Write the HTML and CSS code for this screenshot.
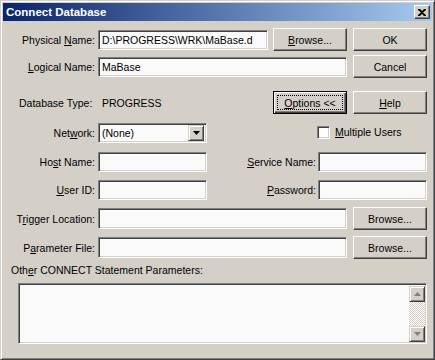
FILE: index.html
```html
<!DOCTYPE html>
<html lang="en">
<head>
    <meta charset="UTF-8">
    <title>Connect Database</title>
    <link rel="stylesheet" href="styles.css">
</head>
<body>
    <div class="window">
        <div class="titlebar">
            <span class="title">Connect Database</span>
            <span class="close-btn">
                <svg width="8" height="7" viewBox="0 0 8 7">
                    <path d="M0 0h2l2 2 2-2h2v1L5 3.5 8 6v1H6L4 5 2 7H0V6l3-2.5L0 1z" fill="#000"/>
                </svg>
            </span>
        </div>

        <div class="content">
            <!-- Physical name -->
            <div class="row r1">
                <label class="lbl">Physical <u>N</u>ame:</label>
                <div class="field w170">D:\PROGRESS\WRK\MaBase.d</div>
                <button class="btn gap5"><u>B</u>rowse...</button>
                <button class="btn gap6">OK</button>
            </div>

            <!-- Logical name -->
            <div class="row r2">
                <label class="lbl"><u>L</u>ogical Name:</label>
                <div class="field w249">MaBase</div>
                <button class="btn gap6">Cancel</button>
            </div>

            <!-- Database type -->
            <div class="row r3">
                <span class="dbtype">Database Type:</span>
                <span class="dbvalue">PROGRESS</span>
                <button class="btn btn-default"><span class="focus"><u>O</u>ptions &lt;&lt;</span></button>
                <button class="btn gap6"><u>H</u>elp</button>
            </div>

            <!-- Network -->
            <div class="row r4 short">
                <label class="lbl">Net<u>w</u>ork:</label>
                <div class="field select w109">
                    <span>(None)</span>
                    <span class="drop">
                        <svg width="7" height="4" viewBox="0 0 7 4"><path d="M0 0h7L3.5 4z" fill="#000"/></svg>
                    </span>
                </div>
                <div class="check-wrap">
                    <span class="checkbox"></span>
                    <span><u>M</u>ultiple Users</span>
                </div>
            </div>

            <!-- Host / service -->
            <div class="row r5 short">
                <label class="lbl">Ho<u>s</u>t Name:</label>
                <div class="field w109"></div>
                <label class="lbl-right"><u>S</u>ervice Name:</label>
                <div class="field w109"></div>
            </div>

            <!-- User / password -->
            <div class="row r6 short">
                <label class="lbl"><u>U</u>ser ID:</label>
                <div class="field w109"></div>
                <label class="lbl-right"><u>P</u>assword:</label>
                <div class="field w109"></div>
            </div>

            <!-- Trigger location -->
            <div class="row r7">
                <label class="lbl">T<u>r</u>igger Location:</label>
                <div class="field w249 short-field"></div>
                <button class="btn gap6">Browse...</button>
            </div>

            <!-- Parameter file -->
            <div class="row r8">
                <label class="lbl">P<u>a</u>rameter File:</label>
                <div class="field w249 short-field"></div>
                <button class="btn gap6">Browse...</button>
            </div>

            <div class="other-label">Oth<u>e</u>r CONNECT Statement Parameters:</div>

            <div class="memo">
                <div class="memo-text"></div>
                <div class="scrollbar">
                    <span class="sb-btn">
                        <svg width="7" height="4" viewBox="0 0 7 4"><path d="M3.5 0L7 4H0z" fill="#808080"/></svg>
                    </span>
                    <span class="sb-track"></span>
                    <span class="sb-btn">
                        <svg width="7" height="4" viewBox="0 0 7 4"><path d="M0 0h7L3.5 4z" fill="#808080"/></svg>
                    </span>
                </div>
            </div>
        </div>
    </div>
</body>
</html>
```

FILE: styles.css
```css
body {
    margin: 0;
    background-color: #d4d0c8;
    font-family: 'Liberation Sans', Arial, sans-serif;
    font-size: 10.5px;
    color: #000;
}
.window {
    width: 435px;
    height: 360px;
    box-sizing: border-box;
    background-color: #d4d0c8;
    border: 1px solid;
    border-color: #d4d0c8 #404040 #404040 #d4d0c8;
    box-shadow: inset 1px 1px #fff, inset -1px -1px #808080;
    padding: 2px;
}

/* title bar */
.titlebar {
    height: 18px;
    background: linear-gradient(to right, #0a246a, #a6caf0);
    display: flex;
    align-items: center;
    justify-content: space-between;
    padding: 0 2px 0 2px;
}
.title {
    color: #fff;
    font-weight: bold;
    font-size: 11.5px;
    padding-left: 1px;
}
.close-btn {
    width: 16px;
    height: 14px;
    box-sizing: border-box;
    background-color: #d4d0c8;
    border: 1px solid;
    border-color: #fff #404040 #404040 #fff;
    box-shadow: inset -1px -1px #808080;
    display: flex;
    align-items: center;
    justify-content: center;
}

/* rows */
.content {
    padding-top: 7px;
}
.row {
    display: flex;
    align-items: center;
    height: 23px;
}
.row.short {
    height: 21px;
}
.r2 { margin-top: 4px; }
.r3 { margin-top: 13px; }
.r4 { margin-top: 8px; }
.r5 { margin-top: 8px; }
.r6 { margin-top: 7px; }
.r7 { margin-top: 7px; }
.r8 { margin-top: 6px; }

.lbl {
    width: 92px;
    text-align: right;
    margin-right: 3px;
    white-space: nowrap;
}
.lbl-right {
    width: 109px;
    text-align: right;
    margin-right: 2px;
    white-space: nowrap;
}

/* sunken fields */
.field {
    height: 20px;
    box-sizing: border-box;
    background-color: #fafafa;
    border: 1px solid;
    border-color: #808080 #fff #fff #808080;
    box-shadow: inset 1px 1px #404040, inset -1px -1px #d4d0c8;
    padding: 0 3px;
    line-height: 18px;
    white-space: nowrap;
    overflow: hidden;
}
.w170 { width: 170px; }
.w249 { width: 249px; }
.w109 { width: 109px; }
.short-field { height: 21px; }

.select {
    display: flex;
    justify-content: space-between;
    align-items: center;
    padding: 0 2px 0 3px;
}
.drop {
    width: 16px;
    height: 16px;
    box-sizing: border-box;
    background-color: #d4d0c8;
    border: 1px solid;
    border-color: #d4d0c8 #404040 #404040 #d4d0c8;
    box-shadow: inset 1px 1px #fff, inset -1px -1px #808080;
    display: flex;
    align-items: center;
    justify-content: center;
}

/* buttons */
.btn {
    width: 74px;
    height: 23px;
    box-sizing: border-box;
    font-family: inherit;
    font-size: 10.5px;
    color: #000;
    background-color: #d4d0c8;
    border: 1px solid;
    border-color: #fff #404040 #404040 #fff;
    box-shadow: inset -1px -1px #808080;
    padding: 0;
    margin: 0;
}
.gap5 { margin-left: 5px; }
.gap6 { margin-left: 6px; }
.btn-default {
    margin-left: 83px;
    border: 1px solid #000;
    box-shadow: inset 1px 1px #fff, inset -1px -1px #404040, inset -2px -2px #808080;
    padding: 3px;
}
.focus {
    display: flex;
    align-items: center;
    justify-content: center;
    height: 100%;
    border: 1px dotted #000;
    box-sizing: border-box;
}

.dbtype {
    margin-left: 16px;
    width: 82px;
}
.dbvalue {
    width: 88px;
    margin-left: 1px;
}

/* checkbox */
.check-wrap {
    display: flex;
    align-items: center;
    margin-left: 110px;
    margin-top: -1px;
}
.checkbox {
    width: 13px;
    height: 13px;
    box-sizing: border-box;
    background-color: #fff;
    border: 1px solid;
    border-color: #808080 #fff #fff #808080;
    box-shadow: inset 1px 1px #404040, inset -1px -1px #d4d0c8;
    margin-right: 5px;
}

.other-label {
    margin-top: 4px;
    margin-left: 8px;
    height: 14px;
    line-height: 14px;
}

/* memo */
.memo {
    display: flex;
    margin: 6px 0 0 15px;
    width: 409px;
    height: 61px;
    box-sizing: border-box;
    background-color: #fafafa;
    border: 1px solid;
    border-color: #808080 #fff #fff #808080;
    box-shadow: inset 1px 1px #404040, inset -1px -1px #d4d0c8;
    padding: 2px 1px 1px 2px;
}
.memo-text {
    flex: 1;
}
.scrollbar {
    width: 16px;
    display: flex;
    flex-direction: column;
}
.sb-btn {
    height: 16px;
    box-sizing: border-box;
    background-color: #d4d0c8;
    border: 1px solid;
    border-color: #d4d0c8 #404040 #404040 #d4d0c8;
    box-shadow: inset 1px 1px #fff, inset -1px -1px #808080;
    display: flex;
    align-items: center;
    justify-content: center;
}
.sb-track {
    flex: 1;
    background-color: #fff;
    background-image: linear-gradient(45deg, #d4d0c8 25%, transparent 25%, transparent 75%, #d4d0c8 75%),
                      linear-gradient(45deg, #d4d0c8 25%, transparent 25%, transparent 75%, #d4d0c8 75%);
    background-size: 2px 2px;
    background-position: 0 0, 1px 1px;
}
```
